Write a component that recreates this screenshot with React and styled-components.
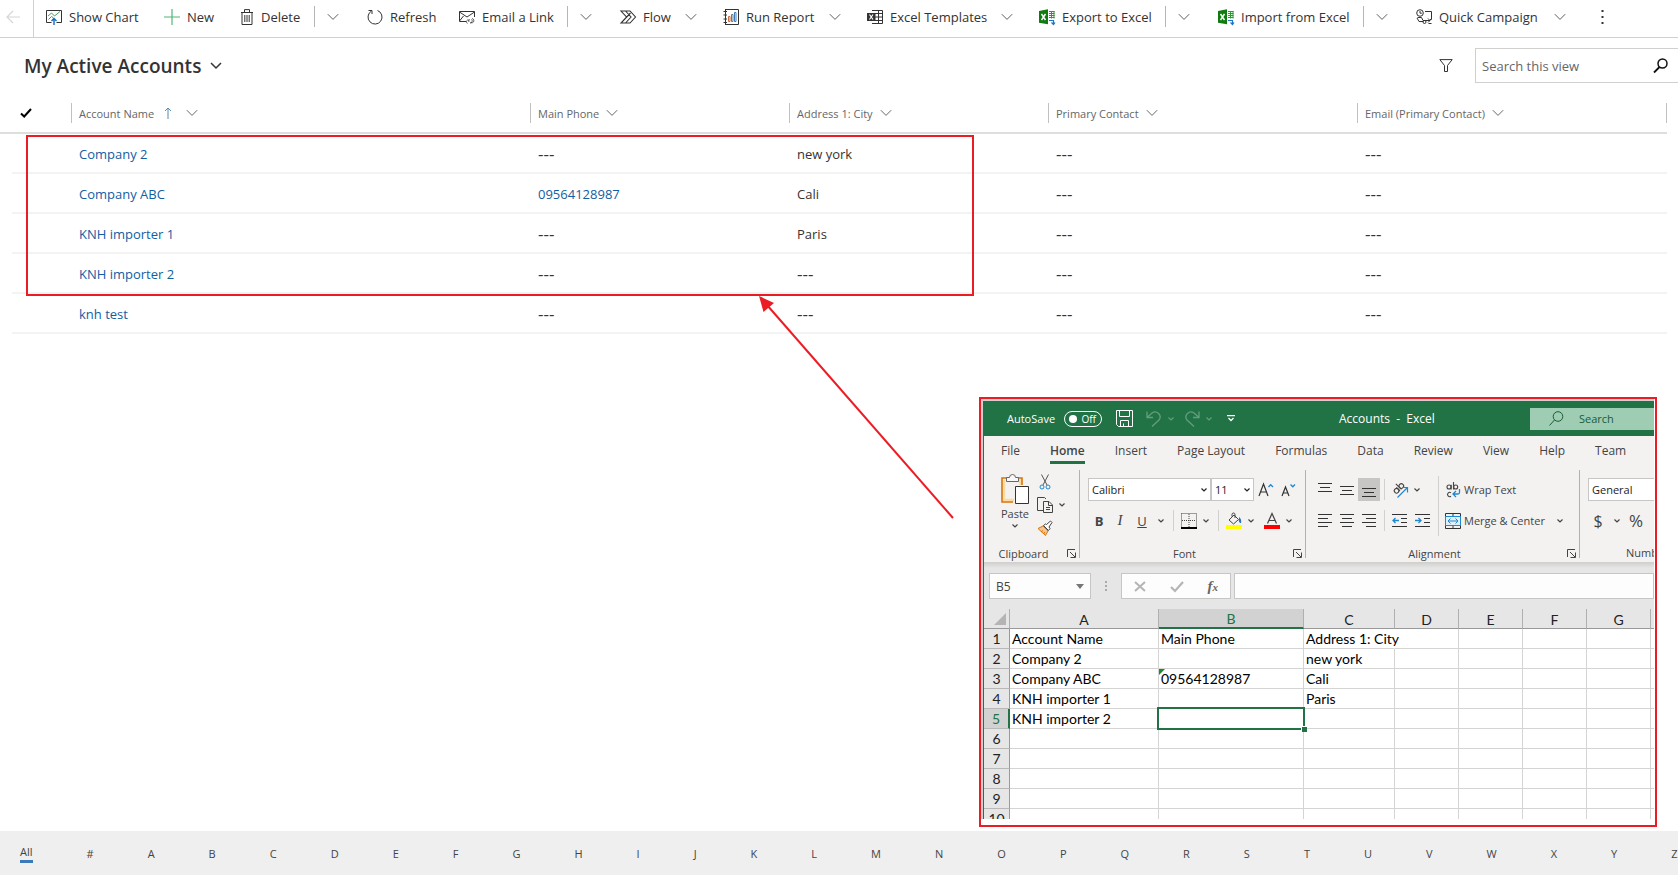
import React from "react";
import styled, { createGlobalStyle, css } from "styled-components";

const GlobalStyle = createGlobalStyle`
  *, *::before, *::after { box-sizing: border-box; }
  body {
    margin: 0;
    background: #fff;
    color: #333;
    font-family: "Open Sans", "Noto Sans", sans-serif;
    font-size: 13px;
    overflow: hidden;
  }
  button, input, select { font: inherit; color: inherit; }
`;

const Page = styled.div`
  position: relative;
  display: flex;
  flex-direction: column;
  min-height: 100vh;
  padding-bottom: 4px;
  overflow: hidden;
`;

const PlainButton = styled.button`
  display: inline-flex;
  align-items: center;
  justify-content: center;
  flex-shrink: 0;
  padding: 0;
  border: 0;
  background: none;
  cursor: pointer;
  white-space: nowrap;
`;

/* ---------- command bar ---------- */

const CommandBar = styled.header`
  display: flex;
  align-items: center;
  height: 38px;
  padding-bottom: 4px;
  border-bottom: 1px solid #d2d0ce;
`;

const BackButton = styled(PlainButton)`
  width: 34px;
  height: 37px;
  margin-bottom: -4px;
  padding: 0 8px 4px 0;
  border-right: 1px solid #d2d0ce;
  color: #d6d6d6;
`;

const Command = styled(PlainButton)`
  justify-content: flex-start;
  gap: 7px;
  width: ${(p) => p.$w}px;
  padding-left: 12px;
  line-height: 20px;
`;

const Split = styled.span`
  flex-shrink: 0;
  width: 1px;
  height: 21px;
  background: #b8b6b4;
`;

const MenuButton = styled(PlainButton)`
  width: ${(p) => (p.$split ? 40 : 28)}px;
  padding-left: ${(p) => (p.$split ? 12 : 2)}px;
  justify-content: flex-start;
  color: #605e5c;
`;

const Dots = styled(PlainButton)`
  width: 16px;
  margin-left: 14px;
`;

const DrawnIcon = styled.svg`
  flex-shrink: 0;
  overflow: visible;
`;

const Svg = ({ w = 16, h = 16, vb, children, ...rest }) => (
  <DrawnIcon width={w} height={h} viewBox={vb || `0 0 ${w} ${h}`} fill="none" stroke="currentColor" aria-hidden="true" {...rest}>
    {children}
  </DrawnIcon>
);

const Chevron = () => <Svg w={12} h={8}><path d="M.8 1.2 6 6.4l5.200-5.200" /></Svg>;

const BackIcon = () => <Svg w={14} h={14}><path d="M14 7H1M7 1 1 7l6 6" strokeWidth="1.200" /></Svg>;

const ChartIcon = () => (
  <Svg>
    <path d="M5.500 13.500h-5v-12h15v12h-5" />
    <path d="m2 7 3.500-3 3 3 5.500-4.500M2.500 10.500l3-3 2 1.500" stroke="#41a35a" />
    <path d="M8 16V9.500M5.500 12 8 9.500l2.500 2.500" stroke="#0f6cbd" strokeWidth="1.400" />
  </Svg>
);
const PlusIcon = () => <Svg><path d="M8 0v16M0 8h16" stroke="#4fb876" strokeWidth="1.200" /></Svg>;
const TrashIcon = () => (
  <Svg w={14} h={16}>
    <path d="M1 3.500h12M4.500 3V.6h5V3M2 3.500v12h10v-12M4.800 6v7M7 6v7M9.200 6v7" />
  </Svg>
);
const RefreshIcon = () => (
  <Svg>
    <path d="M10.500 1.500a7 7 0 1 1-6 .5M1.500 1.500h3.500V5" />
  </Svg>
);
const MailIcon = () => (
  <Svg>
    <path d="M7 12.500H.5v-10h15V8M.5 3 8 8l7.500-5M.5 12l4-5" />
    <path d="M8.500 14.500a2 2 0 0 1 0-3.500h2M13 9.500a2.200 2.200 0 0 1 .5 4.200h-2M10 13a1.800 1.800 0 0 1 .5-2.500M12.500 10.500a2 2 0 0 1-1.500 3.500" strokeWidth=".8" />
  </Svg>
);
const FlowIcon = () => (
  <Svg>
    <path d="M1 2h9l5.500 6-5.500 6H1l5.500-6zM5.500 2l5.500 6-5.500 6M10.500 4l-9 9.500" strokeWidth="1.100" />
  </Svg>
);
const ReportIcon = () => (
  <Svg>
    <path d="M2 .5h13.500v15H2M2.500.5v15M.5 2.500h3.500M.5 6h3.500M.5 10h3.500M.5 13.500h3.500" />
    <path d="M5.500 7.500h1.500v5H5.500z" stroke="#c2703d" />
    <path d="M8.500 5.500H10v7H8.500z" stroke="#777" />
    <path d="M11.500 3.500H13v9h-1.500z" stroke="#3a7cb8" />
  </Svg>
);
const TemplateIcon = () => (
  <Svg>
    <path d="M5 1.500h10.500v13H5M8 4.500h7.500M8 8h7.500M8 11.500h7.500M11.500 1.500v13" />
    <path d="M0 4h8.500v8H0z" fill="#333" stroke="none" />
    <path d="m2.500 5.500 3.500 5M6 5.500l-3.500 5" stroke="#fff" strokeWidth="1.200" />
  </Svg>
);
const ExcelIcon = () => (
  <Svg>
    <path d="M0 2 9 .3v15L0 13.700z" fill="#107c10" stroke="none" />
    <path d="m2.500 5 4 6M6.500 5l-4 6" stroke="#fff" strokeWidth="1.400" />
    <path d="M10 2.500h5.500M10 4.500h5.500M10 6.500h5.500M10 8.500h5.500M12.500 2v7.500M15 2v7.500" stroke="#2d9a2d" />
    <path d="M10 11.500h4.500V15M12.500 13.500l2 2 1.500-2" stroke="#1a76c8" strokeWidth="1.200" />
  </Svg>
);
const CampaignIcon = () => (
  <Svg>
    <circle cx="4" cy="4" r="3.300" />
    <path d="M4 2v2.200h1.800M9 2.500h6.500v8H14M1.500 8.500h4l1.500 3h7M12 9.500l2 2-2 2M1 9l2 3.500h4M12.500 14.500h3" />
    <circle cx="8.500" cy="13" r="1.500" />
  </Svg>
);

const commands = [
  { label: "Show Chart", icon: ChartIcon, w: 118 },
  { label: "New", icon: PlusIcon, w: 76 },
  { label: "Delete", icon: TrashIcon, w: 86, split: true, menu: true },
  { label: "Refresh", icon: RefreshIcon, w: 92 },
  { label: "Email a Link", icon: MailIcon, w: 120, split: true, menu: true },
  { label: "Flow", icon: FlowIcon, w: 75, menu: true },
  { label: "Run Report", icon: ReportIcon, w: 116, menu: true },
  { label: "Excel Templates", icon: TemplateIcon, w: 144, menu: true },
  { label: "Export to Excel", icon: ExcelIcon, w: 138, split: true, menu: true },
  { label: "Import from Excel", icon: ExcelIcon, w: 157, split: true, menu: true },
  { label: "Quick Campaign", icon: CampaignIcon, w: 148, menu: true },
];

/* ---------- view heading ---------- */

const ViewHeader = styled.div`
  display: flex;
  align-items: center;
  height: 56px;
  padding: 0 0 1px 24px;
`;

const Title = styled.h1`
  margin: 0;
  flex: 1;
  font-size: 19px;
  line-height: 26px;
  font-weight: 600;
`;

const ViewPicker = styled(PlainButton)`
  gap: 9px;
`;

const FilterButton = styled(PlainButton)`
  width: 28px;
  height: 28px;
  margin-right: 15px;
`;

const SearchBox = styled.form`
  display: flex;
  align-items: center;
  width: 204px;
  height: 35px;
  margin-right: -1px;
  padding: 0 10px 0 6px;
  border: 1px solid #d2d0ce;
  input {
    flex: 1;
    min-width: 0;
    padding: 0;
    border: 0;
    outline: 0;
    background: none;
    &::placeholder { color: #666; opacity: 1; }
  }
`;

/* ---------- accounts table ---------- */

const ListArea = styled.main`
  position: relative;
  flex: 1;
  padding-right: 11px;
`;

const Table = styled.table`
  width: 100%;
  table-layout: fixed;
  border-collapse: separate;
  border-spacing: 0;
`;

const HeadCell = styled.th`
  height: 40px;
  padding: 0;
  border-bottom: 2px solid #dedede;
  text-align: left;
  font-weight: 400;
  font-size: 11px;
  color: #666;
`;

const HeadInner = styled.div`
  display: flex;
  align-items: center;
  height: 20px;
  padding-left: 7px;
  border-left: 1px solid ${(p) => (p.$check ? "transparent" : "#c0c0c0")};
  border-right: 1px solid ${(p) => (p.$last ? "#c0c0c0" : "transparent")};
`;

const HeadButton = styled(PlainButton)`
  gap: ${(p) => (p.$sorted ? 8 : 7)}px;
`;

const Cell = styled.td`
  height: 40px;
  padding: 2px 0 0 8px;
  border-bottom: 2px solid ${(p) => (p.$gutter ? "transparent" : "#f3f3f3")};
  line-height: 20px;
`;

const CellLink = styled.a`
  color: #115ea3;
  text-decoration: none;
`;

const NoValue = styled.span`
  font-size: 17px;
  line-height: 20px;
`;

const accounts = [
  ["Company 2", null, "new york"],
  ["Company ABC", "09564128987", "Cali"],
  ["KNH importer 1", null, "Paris"],
  ["KNH importer 2", null, null],
  ["knh test", null, null],
];

/* ---------- annotations ---------- */

const Highlight = styled.div`
  position: absolute;
  top: 41px;
  left: 26px;
  width: 948px;
  height: 161px;
  border: 2px solid #ec1c24;
  pointer-events: none;
`;

const Arrow = styled.svg`
  position: absolute;
  top: 202px;
  left: 759px;
  pointer-events: none;
`;

/* ---------- alphabet bar ---------- */

const JumpBar = styled.nav`
  display: flex;
  align-items: center;
  gap: 54px;
  height: 44px;
  padding-left: 20px;
  background: #efefef;
  overflow: hidden;
`;

const Jump = styled(PlainButton)`
  padding-top: ${(p) => (p.$active ? 0 : 2)}px;
  font-size: 11px;
  line-height: 16px;
  color: #444;
  ${(p) => p.$active && css`border-bottom: 3px solid #3b79b7;`}
`;

/* ---------- spreadsheet window ---------- */

const Frame = styled.section`
  position: absolute;
  top: 397px;
  right: 21px;
  width: 678px;
  padding: 0 1px 6px 0;
  border: 2px solid #ec1c24;
  background: #fff;
`;

const Backdrop = styled.div`
  padding: 2px 0 0 2px;
  background: #d0d0d0;
`;

const Sheet = styled.div`
  border-left: 1px solid #217346;
  background: #e6e6e6;
  font-size: 11px;
  color: #444;
  overflow: hidden;
`;

const TitleBar = styled.div`
  display: flex;
  align-items: center;
  height: 35px;
  padding-left: 23px;
  background: #217346;
  color: #fff;
`;

const AutoSave = styled.label`
  display: flex;
  align-items: center;
  width: 95px;
  justify-content: space-between;
`;

const Toggle = styled.span`
  position: relative;
  display: flex;
  align-items: center;
  justify-content: flex-end;
  width: 38px;
  height: 16px;
  padding-right: 5px;
  border: 1px solid #fff;
  border-radius: 8px;
  font-size: 10px;
  line-height: 14px;
  &::before {
    content: "";
    position: absolute;
    left: 4px;
    width: 8px;
    height: 8px;
    border-radius: 50%;
    background: #fff;
  }
  input {
    position: absolute;
    inset: 0;
    margin: 0;
    opacity: 0;
  }
`;

const QuickTools = styled.div`
  display: flex;
  align-items: center;
  margin-left: 14px;
  width: 223px;
`;

const QuickButton = styled(PlainButton)`
  margin-right: ${(p) => p.$gap}px;
  opacity: ${(p) => (p.$dim ? 0.3 : 1)};
`;

const FileName = styled.div`
  flex: 1;
  font-size: 12px;
  white-space: pre;
`;

const SheetSearch = styled.label`
  display: flex;
  align-items: center;
  gap: 15px;
  width: 124px;
  height: 22px;
  padding-left: 19px;
  background: #9fcdb3;
  color: #185c37;
  input {
    flex: 1;
    min-width: 0;
    padding: 0;
    border: 0;
    background: none;
    &::placeholder { color: #185c37; opacity: 1; }
  }
`;

const Tabs = styled.div`
  display: flex;
  align-items: center;
  gap: 30px;
  height: 30px;
  padding-left: 17px;
  background: #f3f2f1;
  font-size: 12px;
`;

const Tab = styled(PlainButton)`
  height: 26px;
  padding-top: 2px;
  border-bottom: 3px solid ${(p) => (p.$active ? "#217346" : "transparent")};
  font-weight: ${(p) => (p.$active ? 600 : 400)};
`;

const Ribbon = styled.div`
  display: flex;
  height: 96px;
  padding-top: 4px;
  background: #f3f2f1;
`;

const RibbonShade = styled.div`
  height: 6px;
  background: linear-gradient(#cfcecd, #e6e6e6);
`;

const Rule = styled.span`
  flex-shrink: 0;
  width: 1px;
  height: ${(p) => p.$h}px;
  margin: ${(p) => p.$m || 0};
  background: ${(p) => (p.$h > 80 ? "#b3b0ad" : "#d2d0ce")};
`;

const Group = styled.div`
  display: flex;
  flex-direction: column;
  flex-shrink: 0;
  width: ${(p) => p.$w}px;
`;

const GroupBody = styled.div`
  display: flex;
  height: 75px;
  padding-left: ${(p) => p.$pad || 8}px;
`;

const GroupLabel = styled.div`
  display: flex;
  align-items: center;
  justify-content: center;
  height: 16px;
  padding-right: 3px;
  span { flex: 1; padding-right: 4px; text-align: center; }
`;

const PasteButton = styled(PlainButton)`
  flex-direction: column;
  justify-content: flex-start;
  width: 38px;
  padding-top: 3px;
  line-height: 20px;
`;

const Stack = styled.div`
  display: flex;
  flex-direction: column;
  gap: 7px;
  padding: 4px 0 0 3px;
`;

const Rows = styled.div`
  display: flex;
  flex-direction: column;
  gap: 8px;
  padding-top: 8px;
`;

const Row = styled.div`
  display: flex;
  align-items: center;
  height: 23px;
`;

const Tool = styled(PlainButton)`
  width: ${(p) => p.$w || 16}px;
  height: 23px;
  margin-left: ${(p) => p.$ml || 0}px;
  background: ${(p) => (p.$active ? "#c8c6c4" : "none")};
`;

const GlyphTool = styled(Tool)`
  font-size: ${(p) => p.$size || 13}px;
  font-weight: ${(p) => (p.$bold ? 700 : 400)};
  font-style: ${(p) => (p.$italic ? "italic" : "normal")};
  font-family: ${(p) => (p.$italic ? '"Liberation Serif", serif' : "inherit")};
  text-decoration: ${(p) => (p.$under ? "underline" : "none")};
`;

const LabelTool = styled(PlainButton)`
  gap: 3px;
  height: 23px;
`;

const Drop = styled.div`
  position: relative;
  display: flex;
  align-items: center;
  width: ${(p) => p.$w}px;
  height: 23px;
  border: 1px solid #c8c6c4;
  background: #fff;
  color: #222;
  select {
    width: 100%;
    height: 21px;
    padding: 0 3px;
    border: 0;
    appearance: none;
    background: none;
  }
  svg {
    position: absolute;
    right: 3px;
    pointer-events: none;
  }
`;

const FormulaBar = styled.div`
  display: flex;
  align-items: center;
  height: 41px;
  padding: 0 0 5px 5px;
`;

const FieldBox = styled.div`
  display: flex;
  align-items: center;
  flex: ${(p) => (p.$w ? "none" : 1)};
  width: ${(p) => p.$w}px;
  height: 26px;
  margin-right: ${(p) => p.$mr || 0}px;
  padding: 0 6px;
  border: 1px solid #c8c6c4;
  background: #fdfdfd;
  font-size: 12px;
  input {
    flex: 1;
    min-width: 0;
    width: 100%;
    padding: 0;
    border: 0;
    background: none;
  }
`;

const Actions = styled(FieldBox)`
  padding: 0 12px;
  justify-content: space-between;
`;

const GridClip = styled.div`
  height: 210px;
  overflow: hidden;
`;

const Grid = styled.table`
  width: 730px;
  table-layout: fixed;
  border-collapse: separate;
  border-spacing: 0;
  background: #fff;
  font-family: Lato, "Open Sans", sans-serif;
  font-size: 14px;
  line-height: 19px;
  color: #000;
`;

const ColHead = styled.th`
  height: 20px;
  padding: 1px 0 0;
  border-right: 1px solid #b0b0b0;
  border-bottom: ${(p) => (p.$on ? "2px solid #217346" : "1px solid #999")};
  background: ${(p) => (p.$on ? "#d2d2d2" : "#e6e6e6")};
  color: ${(p) => (p.$on ? "#217346" : "#222")};
  font-weight: 400;
  line-height: 17px;
  svg { display: block; margin-left: auto; margin-right: 3px; }
`;

const RowHead = styled.th`
  height: 20px;
  padding: 0;
  border-right: ${(p) => (p.$on ? "2px solid #217346" : "1px solid #999")};
  border-bottom: 1px solid #b8b8b8;
  background: ${(p) => (p.$on ? "#d2d2d2" : "#e6e6e6")};
  color: ${(p) => (p.$on ? "#217346" : "#222")};
  font-weight: 400;
`;

const GridCell = styled.td`
  position: relative;
  z-index: ${(p) => (p.$selected ? 1 : 0)};
  height: 20px;
  padding: 0 0 0 2px;
  border-right: 1px solid ${(p) => (p.$spill ? "transparent" : "#d4d4d4")};
  border-bottom: 1px solid #d4d4d4;
  white-space: nowrap;
  ${(p) => p.$flag && css`
    &::before {
      content: "";
      position: absolute;
      top: 0;
      left: 0;
      border: 3px solid;
      border-color: #1d8a2c transparent transparent #1d8a2c;
    }
  `}
  ${(p) => p.$selected && css`
    &::before {
      content: "";
      position: absolute;
      inset: -2px;
      border: 2px solid #217346;
    }
    &::after {
      content: "";
      position: absolute;
      right: -4px;
      bottom: -4px;
      width: 6px;
      height: 6px;
      border: solid #fff;
      border-width: 1px 0 0 1px;
      background: #217346;
    }
  `}
`;

const Tiny = () => <Svg w={6} h={4}><path d="m.5.5 2.500 2.500L5.500.5" strokeWidth="1.200" /></Svg>;
const TinyMenu = ({ label, ml = 4 }) => <Tool $w={10} $ml={ml} aria-label={label}><Tiny /></Tool>;
const Launcher = () => (
  <Svg w={9} h={9}><path d="M.5 8V.5H8M3 3l5 5M8.500 3.500v5h-5" /></Svg>
);

const PasteIcon = () => (
  <Svg w={28} h={31}>
    <path d="M3 7v20h10M18 7h1.500v5" stroke="#fbdca0" strokeWidth="2.500" />
    <path d="M6 5H1v24h11M17 5h4v7" stroke="#d9730d" strokeWidth="1.600" />
    <path d="M5.500 8.500v-4h3a3 3 0 0 1 6 0h3v4z" fill="#f8f8f8" stroke="#666" />
    <path d="M14.500 13.500h13v17h-13z" fill="#fff" stroke="#333" />
  </Svg>
);
const CutIcon = () => (
  <Svg w={12} h={16}>
    <path d="M2.500.5 8 11M9.500.5 4 11" stroke="#555" />
    <circle cx="3" cy="13" r="2" stroke="#1e88d0" /><circle cx="9" cy="13" r="2" stroke="#1e88d0" />
  </Svg>
);
const CopyIcon = () => (
  <Svg>
    <path d="M6 13.500H.5V.5h7L9 2M6.500 4.500H12l3.500 3.500v7.500h-9zM11.500 4.500V8.500h4M9 10.500h4M9 12.500h4" />
  </Svg>
);
const BrushIcon = () => (
  <Svg>
    <path d="m1 8.500 5-2.500 5 5-2.500 4.500z" fill="#f6c690" stroke="#d9730d" />
    <path d="m4 12 2-1.500M6.500 14 8 12" stroke="#d9730d" />
    <path d="m6.500 5.500 5 5 1.500-2-1-1.500 3-4.500L13.500 1 9.500 4.500 8.500 4z" fill="#fff" stroke="#444" />
  </Svg>
);
const GrowIcon = ({ down }) => (
  <Svg w={17} h={16}>
    <path d={down ? "m2 14 3.500-9L9 14M3.500 11h4" : "m1 14 4.500-12L10 14M2.500 10h6"} stroke="#333" strokeWidth="1.200" />
    <path d={down ? "m10.500 2.500 2.300 2.300 2.200-2.300" : "m10.500 5 2.200-2.300L15 5"} stroke="#1e88d0" strokeWidth="1.300" />
  </Svg>
);
const BordersIcon = () => (
  <Svg>
    <path d="M.5.5h15v14M.5.5v14M8 1v14M1 7.500h14" strokeDasharray="1 1" /><path d="M0 15h16" stroke="#000" strokeWidth="2" />
  </Svg>
);
const FillIcon = () => (
  <Svg>
    <path d="m3 7 5-5 4.500 4.500-5 4.500zM6 3.500V1.500a1.500 1.500 0 0 1 3 0V5" />
    <path d="M13 4.500c1.500 1 2 3 1.500 5.500l-1.500-2.500" fill="#1e6fbd" stroke="#1e6fbd" />
    <path d="M0 14h16" stroke="#ff0" strokeWidth="4" />
  </Svg>
);
const FontColorIcon = () => (
  <Svg><path d="M3.500 10.500 8 .5l4.500 10M5 7.500h6" strokeWidth="1.200" /><path d="M0 14h16" stroke="red" strokeWidth="4" /></Svg>
);
const Lines = ({ d }) => <Svg w={15} h={15}><path d={d} stroke="#333" /></Svg>;
const AngleIcon = () => (
  <Svg>
    <g strokeWidth="1.100" stroke="#444" transform="rotate(-45 6 6)">
      <circle cx="3" cy="7" r="2.300" /><path d="M5.300 4.500v5" />
      <circle cx="9.700" cy="7" r="2.300" /><path d="M7.400 1.500v8" />
    </g>
    <path d="M5.500 15.500 15.500 5.500M10.500 5.500h5v5" stroke="#1e88d0" strokeWidth="1.200" />
  </Svg>
);
const IndentIcon = ({ inward }) => (
  <Svg>
    <path d="M0 1.500h15M9 5.500h6M9 9.500h6M0 13.500h15" stroke="#333" />
    <path d={inward ? "M0 7.500h6M3.500 5 6 7.500 3.500 10" : "M7 7.500H1M3.500 5 1 7.500 3.500 10"} stroke="#1e88d0" strokeWidth="1.300" />
  </Svg>
);
const WrapIcon = () => (
  <Svg>
    <g strokeWidth="1.100" stroke="#444">
      <circle cx="4" cy="5" r="2" /><path d="M6.200 2.700v4.800" />
      <circle cx="10.700" cy="5" r="2" /><path d="M8.500 0v7.500" />
      <path d="M6 10.700a2.200 2.200 0 1 0 0 3.600" />
    </g>
    <path d="M14.500 7v3.500a1.500 1.500 0 0 1-1.500 1.500H8.500M11 9l-3 3 3 3" stroke="#1e88d0" strokeWidth="1.300" />
  </Svg>
);
const MergeIcon = () => (
  <Svg>
    <path d="M.5.500h15v15H.5zM.5 3.500h15M.5 12.500h15M8 .5v3M8 12.500v3" stroke="#333" />
    <path d="M.5 3.500h15v9H.5z" fill="#dff0fb" stroke="#1e88d0" /><path d="M3 8h10M5.500 5.500 3 8l2.500 2.500M10.500 5.500 13 8l-2.500 2.500" stroke="#1e88d0" />
  </Svg>
);

const sheetRows = [
  ["Account Name", "Main Phone", "Address 1: City"],
  ["Company 2", "", "new york"],
  ["Company ABC", "09564128987", "Cali"],
  ["KNH importer 1", "", "Paris"],
  ["KNH importer 2"],
  [], [], [], [], [],
];
const sheetCols = ["A", "B", "C", "D", "E", "F", "G", "H"];
const sheetColWidths = [149, 145, 91, 64, 64, 64, 64, 63];

function SpreadsheetWindow() {
  return (
    <Frame aria-label="Accounts workbook">
      <Backdrop>
        <Sheet>
          <TitleBar>
            <AutoSave>AutoSave<Toggle><input type="checkbox" />Off</Toggle></AutoSave>
            <QuickTools>
              <QuickButton $gap={13} aria-label="Save">
                <Svg w={17} h={17}><path d="M.5.5h16v16h-14l-2-2zM3.500.5v6h10v-6M4.500 16.500v-6h8v6M7.500 13.500v3" /></Svg>
              </QuickButton>
              <QuickButton $gap={6} $dim aria-label="Undo">
                <Svg><path d="M1 .5v6h6M1.500 6 6 2a5 5 0 0 1 7 7l-7 6.500" strokeWidth="1.300" /></Svg>
              </QuickButton>
              <QuickButton $gap={11} $dim aria-label="Undo history"><Tiny /></QuickButton>
              <QuickButton $gap={5} $dim aria-label="Redo">
                <Svg><path d="M14 .5v6H8M13.500 6 9 2a5 5 0 0 0-7 7l7 6.500" strokeWidth="1.300" /></Svg>
              </QuickButton>
              <QuickButton $gap={15} $dim aria-label="Redo history"><Tiny /></QuickButton>
              <QuickButton $gap={0} aria-label="Customize toolbar">
                <Svg w={8} h={7}><path d="M0 .7h8M1.500 3 4 5.500 6.500 3" strokeWidth="1.300" /></Svg>
              </QuickButton>
            </QuickTools>
            <FileName>Accounts  -  Excel</FileName>
            <SheetSearch>
              <Svg w={15} h={15}><circle cx="9" cy="5.500" r="4.800" /><path d="M5.500 9 .5 14.500" /></Svg>
              <input type="text" placeholder="Search" aria-label="Search workbook" />
            </SheetSearch>
          </TitleBar>
          <Tabs>
            {["File", "Home", "Insert", "Page Layout", "Formulas", "Data", "Review", "View", "Help", "Team"].map((t) => (
              <Tab key={t} $active={t === "Home"}>{t}</Tab>
            ))}
          </Tabs>
          <Ribbon>
            <Group $w={95}>
              <GroupBody $pad={12}>
                <PasteButton><PasteIcon />Paste<Tiny /></PasteButton>
                <Stack>
                  <PlainButton aria-label="Cut"><CutIcon /></PlainButton>
                  <PlainButton aria-label="Copy"><CopyIcon /></PlainButton>
                  <PlainButton aria-label="Format Painter"><BrushIcon /></PlainButton>
                </Stack>
                <CopyMenu><TinyMenu label="Copy options" /></CopyMenu>
              </GroupBody>
              <GroupLabel><span>Clipboard</span><Launcher /></GroupLabel>
            </Group>
            <Rule $h={88} />
            <Group $w={225}>
              <GroupBody>
                <Rows>
                  <Row>
                    <Drop $w={123}><select aria-label="Font"><option>Calibri</option></select><Tiny /></Drop>
                    <Drop $w={43}><select aria-label="Font size"><option>11</option></select><Tiny /></Drop>
                    <Tool $w={17} $ml={4} aria-label="Increase font size"><GrowIcon /></Tool>
                    <Tool $w={17} $ml={5} aria-label="Decrease font size"><GrowIcon down /></Tool>
                  </Row>
                  <Row>
                    <GlyphTool $w={22} $bold>B</GlyphTool>
                    <GlyphTool $w={20} $italic $size={15}>I</GlyphTool>
                    <GlyphTool $w={24} $under>U</GlyphTool>
                    <TinyMenu label="Underline options" ml={2} />
                    <Rule $h={21} $m="0 7px" />
                    <Tool aria-label="Borders"><BordersIcon /></Tool>
                    <TinyMenu label="Border options" />
                    <Rule $h={21} $m="0 7px" />
                    <Tool aria-label="Fill color"><FillIcon /></Tool>
                    <TinyMenu label="Fill options" />
                    <Tool $ml={8} aria-label="Font color"><FontColorIcon /></Tool>
                    <TinyMenu label="Font color options" />
                  </Row>
                </Rows>
              </GroupBody>
              <GroupLabel><span>Font</span><Launcher /></GroupLabel>
            </Group>
            <Rule $h={88} />
            <Group $w={273}>
              <GroupBody>
                <Rows>
                  <Row>
                    <Tool $w={22} aria-label="Top align"><Lines d="M0 1.500h14M2 5.500h10M0 9.500h14" /></Tool>
                    <Tool $w={22} aria-label="Middle align"><Lines d="M0 4.500h14M2 8.500h10M0 12.500h14" /></Tool>
                    <Tool $w={22} $active aria-label="Bottom align"><Lines d="M0 6.500h14M2 10.500h10M0 14.500h14" /></Tool>
                    <Rule $h={21} $m="0 7px 0 4px" />
                    <Tool aria-label="Orientation"><AngleIcon /></Tool>
                    <TinyMenu label="Orientation options" />
                  </Row>
                  <Row>
                    <Tool $w={22} aria-label="Align left"><Lines d="M0 1.500h14M0 5.500h10M0 9.500h14M0 13.500h10" /></Tool>
                    <Tool $w={22} aria-label="Center"><Lines d="M0 1.500h14M2 5.500h10M0 9.500h14M2 13.500h10" /></Tool>
                    <Tool $w={22} aria-label="Align right"><Lines d="M0 1.500h14M4 5.500h10M0 9.500h14M4 13.500h10" /></Tool>
                    <Rule $h={21} $m="0 7px 0 4px" />
                    <Tool aria-label="Decrease indent"><IndentIcon /></Tool>
                    <Tool $ml={7} aria-label="Increase indent"><IndentIcon inward /></Tool>
                  </Row>
                </Rows>
                <Rule $h={60} $m="6px 6px 6px 7px" />
                <Rows>
                  <Row><LabelTool><WrapIcon />Wrap Text</LabelTool></Row>
                  <Row><LabelTool><MergeIcon />Merge &amp; Center</LabelTool><TinyMenu label="Merge options" ml={10} /></Row>
                </Rows>
              </GroupBody>
              <GroupLabel><span>Alignment</span><Launcher /></GroupLabel>
            </Group>
            <Rule $h={88} />
            <Group $w={140}>
              <GroupBody>
                <Rows>
                  <Row><Drop $w={120}><select aria-label="Number format"><option>General</option></select></Drop></Row>
                  <Row>
                    <GlyphTool $w={20} $size={16}>$</GlyphTool>
                    <TinyMenu label="Currency options" />
                    <GlyphTool $w={20} $ml={4} $size={17}>%</GlyphTool>
                  </Row>
                </Rows>
              </GroupBody>
              <NumberLabel>Number</NumberLabel>
            </Group>
          </Ribbon>
          <RibbonShade />
          <FormulaBar>
            <FieldBox $w={102} $mr={14}>
              <input type="text" defaultValue="B5" aria-label="Name box" />
              <Svg w={8} h={5}><path d="M0 0h8L4 5z" fill="#777" stroke="none" /></Svg>
            </FieldBox>
            <Svg w={2} h={12}><path d="M1 1v10" strokeWidth="2" strokeDasharray="2 2" stroke="#aaa" /></Svg>
            <ActionsGap />
            <Actions $w={110} $mr={3}>
              <PlainButton aria-label="Cancel"><Svg w={12} h={11}><path d="m1 1 10 9M11 1 1 10" stroke="#b5b5b5" strokeWidth="2" /></Svg></PlainButton>
              <PlainButton aria-label="Enter"><Svg w={14} h={11}><path d="m1 6 4 4 8-9" stroke="#b5b5b5" strokeWidth="2.200" /></Svg></PlainButton>
              <FxButton>f<sub>x</sub></FxButton>
            </Actions>
            <FieldBox><input type="text" aria-label="Formula" /></FieldBox>
          </FormulaBar>
          <GridClip>
            <Grid>
              <colgroup>
                <col width="26" />
                {sheetColWidths.map((w, i) => <col key={i} width={w} />)}
              </colgroup>
              <thead>
                <tr>
                  <ColHead aria-label="Select all"><Svg w={12} h={12}><path d="M12 0v12H0z" fill="#b4b4b4" stroke="none" /></Svg></ColHead>
                  {sheetCols.map((c) => <ColHead key={c} $on={c === "B"}>{c === "H" ? "" : c}</ColHead>)}
                </tr>
              </thead>
              <tbody>
                {sheetRows.map((row, r) => (
                  <tr key={r}>
                    <RowHead $on={r === 4}>{r + 1}</RowHead>
                    {sheetCols.map((c, i) => (
                      <GridCell key={c} $spill={r === 0 && i === 2} $flag={r === 2 && i === 1} $selected={r === 4 && i === 1}>
                        {row[i]}
                      </GridCell>
                    ))}
                  </tr>
                ))}
              </tbody>
            </Grid>
          </GridClip>
        </Sheet>
      </Backdrop>
    </Frame>
  );
}

const CopyMenu = styled.div`
  display: flex;
  align-items: center;
  height: 70px;
`;

const NumberLabel = styled.div`
  padding-left: 46px;
  line-height: 16px;
`;

const ActionsGap = styled.span`
  width: 14px;
`;

const FxButton = styled(PlainButton)`
  align-items: baseline;
  font-family: "Liberation Serif", serif;
  font-style: italic;
  font-weight: 700;
  font-size: 15px;
  color: #666;
  sub { font-size: 11px; }
`;

const columns = ["Account Name", "Main Phone", "Address 1: City", "Primary Contact", "Email (Primary Contact)"];

const Empty = () => <NoValue>---</NoValue>;

export default function App() {
  return (
    <Page>
      <GlobalStyle />
      <CommandBar>
        <BackButton aria-label="Back"><BackIcon /></BackButton>
        {commands.map(({ label, icon: Icon, w, split, menu }) => (
          <React.Fragment key={label}>
            <Command $w={w}><Icon />{label}</Command>
            {split && <Split />}
            {menu && <MenuButton $split={split} aria-label={`${label} options`}><Chevron /></MenuButton>}
          </React.Fragment>
        ))}
        <Dots aria-label="More commands">
          <Svg w={3} h={16}><path d="M1.500 1v2M1.500 7v2M1.500 13v2" strokeWidth="2" /></Svg>
        </Dots>
      </CommandBar>

      <ViewHeader>
        <Title>
          <ViewPicker>
            My Active Accounts
            <Svg w={12} h={8}><path d="m1 1 5 5 5-5" strokeWidth="1.500" /></Svg>
          </ViewPicker>
        </Title>
        <FilterButton aria-label="Edit filters">
          <Svg w={14} h={13}><path d="M.8.600h12.400L8.500 6.500v6h-3v-6z" /></Svg>
        </FilterButton>
        <SearchBox>
          <input type="search" placeholder="Search this view" aria-label="Search this view" />
          <PlainButton type="button" aria-label="Start search">
            <Svg w={15} h={15}><circle cx="9.500" cy="5.500" r="4.500" strokeWidth="1.500" stroke="#111" /><path d="M6.500 9 1 14.500" strokeWidth="1.800" stroke="#111" /></Svg>
          </PlainButton>
        </SearchBox>
      </ViewHeader>

      <ListArea>
        <Table>
          <colgroup>
            <col width="12" />
            <col width="59" />
            <col width="459" />
            <col width="259" />
            <col width="259" />
            <col width="309" />
            <col />
          </colgroup>
          <thead>
            <tr>
              <HeadCell />
              <HeadCell>
                <HeadInner $check>
                  <Svg w={12} h={10} stroke="#000"><path d="m1 5.500 3.200 3L11 1" strokeWidth="2" /></Svg>
                </HeadInner>
              </HeadCell>
              {columns.map((c, i) => (
                <HeadCell key={c}>
                  <HeadInner $last={i === 4}>
                    <HeadButton $sorted={i === 0}>
                      {c}
                      {i === 0 && <Svg w={16} h={12} stroke="#5b88ad"><path d="M6 12V1M3 4l3-3 3 3" /></Svg>}
                      <Chevron />
                    </HeadButton>
                  </HeadInner>
                </HeadCell>
              ))}
            </tr>
          </thead>
          <tbody>
            {accounts.map(([name, phone, city]) => (
              <tr key={name}>
                <Cell $gutter />
                <Cell />
                <Cell><CellLink href="#account">{name}</CellLink></Cell>
                <Cell>{phone ? <CellLink href="#call">{phone}</CellLink> : <Empty />}</Cell>
                <Cell>{city || <Empty />}</Cell>
                <Cell><Empty /></Cell>
                <Cell><Empty /></Cell>
              </tr>
            ))}
          </tbody>
        </Table>
        <Highlight />
        <Arrow width="196" height="224" viewBox="0 0 196 224" aria-hidden="true">
          <path d="M8 9 194 222" stroke="#ec1c24" strokeWidth="2" />
          <path d="m0 0 15 7L4.500 16z" fill="#ec1c24" />
        </Arrow>
      </ListArea>

      <JumpBar aria-label="Jump to letter">
        {["All", "#", ..."ABCDEFGHIJKLMNOPQRSTUVWXYZ"].map((l) => (
          <Jump key={l} $active={l === "All"}>{l}</Jump>
        ))}
      </JumpBar>

      <SpreadsheetWindow />
    </Page>
  );
}
